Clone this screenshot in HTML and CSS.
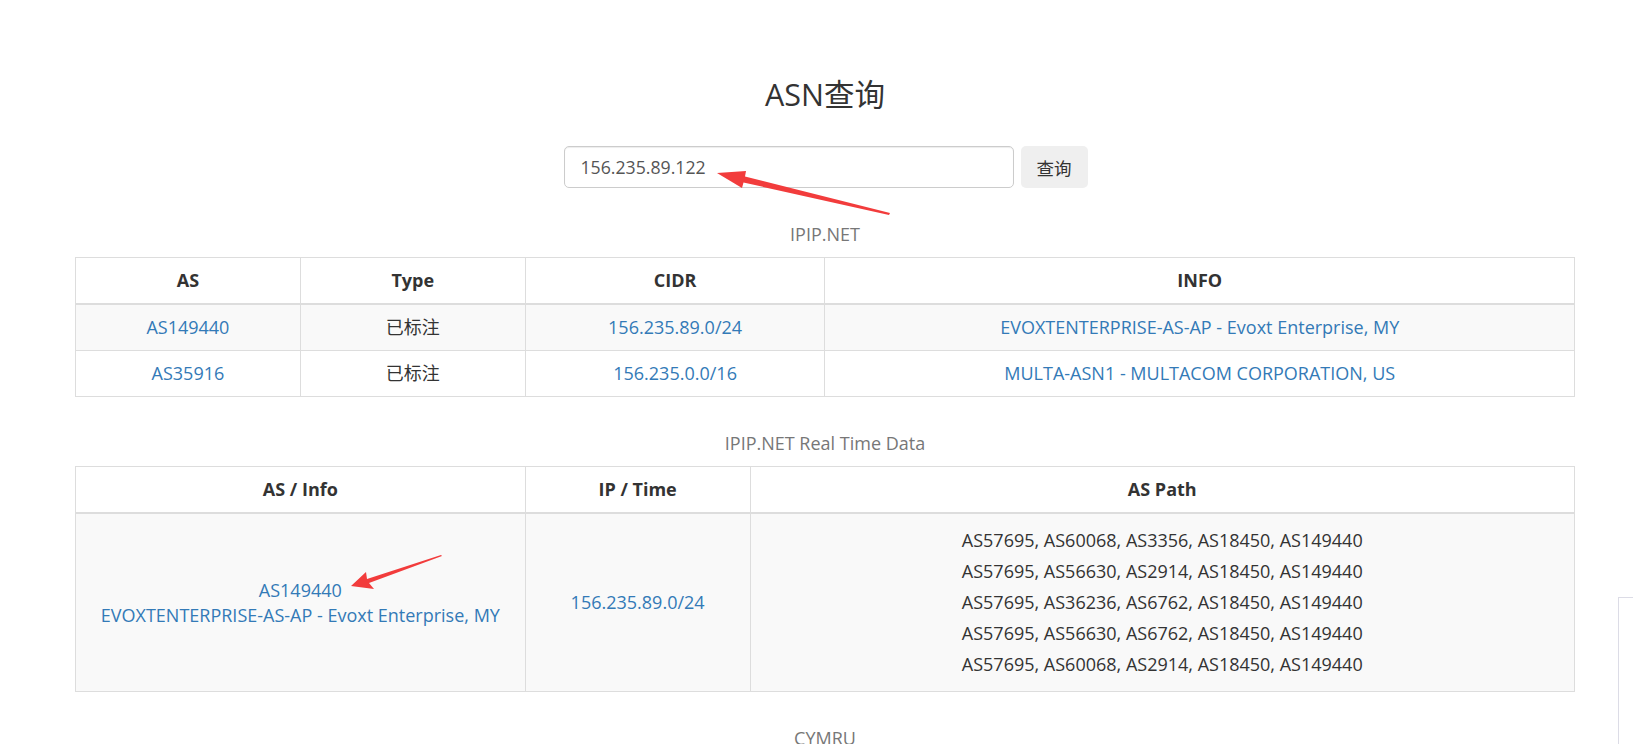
FILE: index.html
```html
<!DOCTYPE html>
<html lang="zh-CN">
<head>
<meta charset="utf-8">
<title>ASN查询</title>
<link rel="stylesheet" href="styles.css">
</head>
<body>
<div class="page">
  <h3 class="title">ASN查询</h3>
  <form class="search">
    <input class="search-input" type="text" value="156.235.89.122">
    <button class="search-btn" type="button">查询</button>
  </form>

  <table class="data">
    <caption>IPIP.NET</caption>
    <colgroup><col class="w15"><col class="w15"><col class="w20"><col class="w50"></colgroup>
    <thead>
      <tr><th>AS</th><th>Type</th><th>CIDR</th><th>INFO</th></tr>
    </thead>
    <tbody>
      <tr class="odd"><td><a href="#">AS149440</a></td><td>已标注</td><td><a href="#">156.235.89.0/24</a></td><td><a href="#">EVOXTENTERPRISE-AS-AP - Evoxt Enterprise, MY</a></td></tr>
      <tr><td><a href="#">AS35916</a></td><td>已标注</td><td><a href="#">156.235.0.0/16</a></td><td><a href="#">MULTA-ASN1 - MULTACOM CORPORATION, US</a></td></tr>
    </tbody>
  </table>

  <table class="data">
    <caption>IPIP.NET Real Time Data</caption>
    <colgroup><col class="w30"><col class="w15"><col class="w55"></colgroup>
    <thead>
      <tr><th>AS / Info</th><th>IP / Time</th><th>AS Path</th></tr>
    </thead>
    <tbody>
      <tr class="odd">
        <td class="mid"><a href="#">AS149440</a><br><a href="#">EVOXTENTERPRISE-AS-AP - Evoxt Enterprise, MY</a></td>
        <td class="mid"><a href="#">156.235.89.0/24</a></td>
        <td class="paths">
          <div>AS57695, AS60068, AS3356, AS18450, AS149440</div>
          <div>AS57695, AS56630, AS2914, AS18450, AS149440</div>
          <div>AS57695, AS36236, AS6762, AS18450, AS149440</div>
          <div>AS57695, AS56630, AS6762, AS18450, AS149440</div>
          <div>AS57695, AS60068, AS2914, AS18450, AS149440</div>
        </td>
      </tr>
    </tbody>
  </table>

  <table class="data">
    <caption>CYMRU</caption>
  </table>
</div>

<svg class="arrow arrow-1" width="190" height="60" viewBox="0 0 190 60">
  <polygon points="3,10 32,8 31,13.5 176,50 175,52 29.5,19.5 28,25" fill="#f23c3c"/>
</svg>
<svg class="arrow arrow-2" width="100" height="40" viewBox="0 0 100 40">
  <polygon points="2,33 17,19 18,26 92,2 93,3 20,30 25,36" fill="#f23c3c"/>
</svg>
<div class="edge-box"></div>
</body>
</html>
```

FILE: styles.css
```css
html, body {
  margin: 0;
  padding: 0;
  background: #fff;
}
body {
  font-family: "Open Sans", "Noto Sans CJK SC", sans-serif;
  font-size: 18px;
  line-height: 25px;
  color: #333;
  overflow: hidden;
}
.page {
  width: 1500px;
  margin-left: 75px;
}
.title {
  margin: 78px 0 0;
  font-size: 30.5px;
  line-height: 33px;
  font-weight: 400;
  text-align: center;
  color: #333;
}
.search {
  margin: 35px 0 24px;
  display: flex;
  justify-content: center;
  gap: 7px;
  height: 42px;
}
.search-input {
  width: 450px;
  height: 42px;
  box-sizing: border-box;
  padding: 0 16px;
  border: 1px solid #ccc;
  border-radius: 5px;
  box-shadow: inset 0 1px 1px rgba(0,0,0,.075);
  font-family: "Open Sans", "Noto Sans CJK SC", sans-serif;
  font-size: 17.7px;
  color: #555;
  margin-left: 1px;
}
.search-btn {
  width: 67px;
  height: 42px;
  border: 0;
  border-radius: 5px;
  background: #efefef;
  font-family: "Noto Sans CJK SC", sans-serif;
  font-size: 17.5px;
  color: #333;
  padding: 0;
}
.data {
  width: 1500px;
  border-collapse: collapse;
  border-spacing: 0;
  table-layout: fixed;
  margin-bottom: 24px;
}
.data caption {
  padding: 10px 0;
  color: #777;
  text-align: center;
  line-height: 25px;
}
.w15 { width: 15%; }
.w20 { width: 20%; }
.w30 { width: 30%; }
.w50 { width: 50%; }
.w55 { width: 55%; }
.data th, .data td {
  border: 1px solid #ddd;
  padding: 10px;
  text-align: center;
  line-height: 25px;
}
.data th {
  border-bottom-width: 2px;
  font-weight: 700;
}
.data tr.odd td {
  background: #f9f9f9;
}
.data td.mid {
  vertical-align: middle;
}
.data td.paths {
  padding-top: 11px;
  padding-bottom: 11px;
}
.data td.paths div {
  line-height: 31px;
}
a {
  color: #337ab7;
  text-decoration: none;
}
.arrow {
  position: absolute;
}
.arrow-1 {
  left: 714px;
  top: 163px;
}
.arrow-2 {
  left: 349px;
  top: 553px;
}
.edge-box {
  position: absolute;
  left: 1618px;
  top: 597px;
  width: 30px;
  height: 200px;
  border-left: 1px solid #dcdce6;
  border-top: 1px solid #dcdce6;
}
```
